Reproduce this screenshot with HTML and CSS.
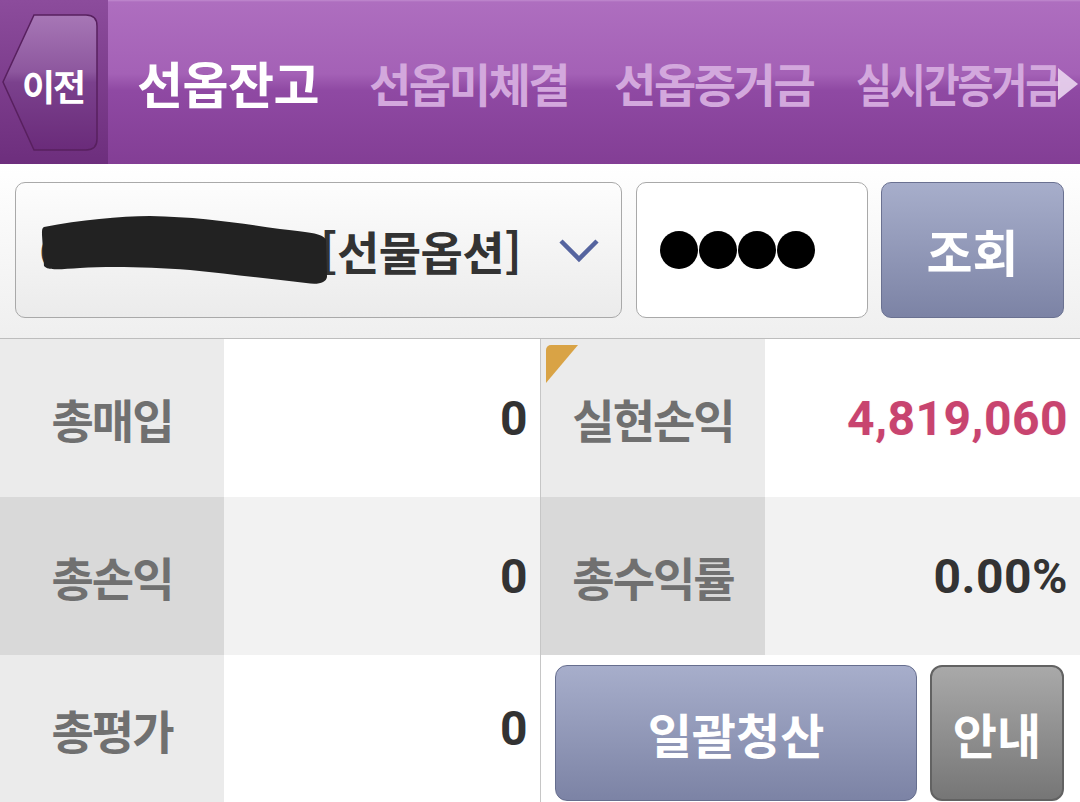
FILE: index.html
```html
<!DOCTYPE html>
<html lang="ko">
<head>
  <meta charset="UTF-8">
  <meta name="viewport" content="width=device-width, initial-scale=1.0">
  <title>선옵잔고</title>
  <link rel="stylesheet" href="styles.css">
</head>
<body>
  <header class="topbar">
    <div class="back-area">
      <div class="back-btn">
        <svg class="back-shape" viewBox="0 0 108 164" width="108" height="164">
          <defs>
            <linearGradient id="backFill" x1="0" y1="0" x2="0" y2="1">
              <stop offset="0" stop-color="#a777b6"/>
              <stop offset="0.42" stop-color="#8d579e"/>
              <stop offset="0.5" stop-color="#7b418d"/>
              <stop offset="1" stop-color="#6a2b7a"/>
            </linearGradient>
          </defs>
          <path d="M34 15 H86 Q97 15 97 26 V139 Q97 150 86 150 H34 L3 82 Z" fill="url(#backFill)" stroke="#58205f" stroke-width="1.5"/>
        </svg>
        <span class="back-label">이전</span>
      </div>
    </div>
    <nav class="tabs">
      <span class="tab active">선옵잔고</span>
      <span class="tab">선옵미체결</span>
      <span class="tab">선옵증거금</span>
      <span class="tab narrow">실시간증거금</span>
    </nav>
    <span class="tab-more"></span>
  </header>

  <section class="query">
    <div class="account-select">
      <span class="acct">
        <span class="acct-no">000-00-000000</span>
        <svg class="redact" viewBox="0 0 290 70" width="290" height="70" preserveAspectRatio="none">
          <path d="M4 12 C40 5 80 1 110 1 C160 2 200 8 240 14 C265 17 284 18 286 25 L287 62 C286 68 278 70 266 68 C230 64 190 59 150 55 C110 52 70 51 40 53 C22 54 8 56 4 51 L2 20 C2 15 2 13 4 12 Z" fill="#222"/>
        </svg>
      </span>
      <span class="acct-type">[선물옵션]</span>
      <svg class="chevron" viewBox="0 0 44 28" width="44" height="28">
        <path d="M4 5 L22 23 L40 5" fill="none" stroke="#55649f" stroke-width="4.5"/>
      </svg>
    </div>
    <div class="pw-field">
      <span class="dot"></span><span class="dot"></span><span class="dot"></span><span class="dot"></span>
    </div>
    <button class="btn-query">조회</button>
  </section>

  <section class="summary">
    <div class="cell label">총매입</div>
    <div class="cell value">0</div>
    <div class="cell label split marked">실현손익</div>
    <div class="cell value profit">4,819,060</div>

    <div class="cell label alt">총손익</div>
    <div class="cell value alt">0</div>
    <div class="cell label alt split">총수익률</div>
    <div class="cell value alt">0.00%</div>

    <div class="cell label">총평가</div>
    <div class="cell value">0</div>
    <div class="cell actions split">
      <button class="btn-clear">일괄청산</button>
      <button class="btn-info">안내</button>
    </div>
  </section>
</body>
</html>
```

FILE: styles.css
```css
/* General */
body {
  margin: 0;
  width: 1080px;
  height: 802px;
  overflow: hidden;
  font-family: "Noto Sans CJK KR", "Noto Sans", sans-serif;
  background: #fff;
  color: #333;
}

button {
  font-family: inherit;
  cursor: pointer;
}

/* Top bar */
.topbar {
  position: relative;
  display: flex;
  height: 164px;
  background: linear-gradient(#c08ace 0, #ae6ebf 2px, #a461b6 45%, #8f49a3 55%, #833e95 100%);
}

.back-area {
  position: relative;
  width: 108px;
  background: linear-gradient(#8c4c9c, #6d2e7d);
}

.back-shape {
  display: block;
}

.back-label {
  position: absolute;
  left: 22px;
  top: 59px;
  color: #fff;
  font-size: 36px;
  font-weight: 700;
  letter-spacing: -2px;
}

.tabs {
  display: flex;
  align-items: center;
  flex: 1;
  padding-left: 29px;
  overflow: hidden;
}

.tab {
  color: #d3a8dd;
  font-size: 46px;
  font-weight: 700;
  letter-spacing: -2.5px;
  margin-right: 46px;
  white-space: nowrap;
}

.tab.active {
  color: #fff;
  font-size: 50px;
  letter-spacing: -0.5px;
  margin-right: 50px;
}

.tab.narrow {
  display: inline-block;
  margin-left: -3px;
  margin-right: 0;
  transform: scaleX(0.85);
  transform-origin: left center;
}

.tab-more {
  position: absolute;
  right: 2px;
  top: 68px;
  width: 0;
  height: 0;
  border-top: 16px solid transparent;
  border-bottom: 16px solid transparent;
  border-left: 20px solid rgba(232, 210, 238, 0.92);
}

/* Query row */
.query {
  display: flex;
  gap: 14px;
  height: 156px;
  padding: 18px 16px 0 15px;
  background: linear-gradient(#fff, #efefef);
}

.account-select {
  display: flex;
  align-items: center;
  width: 608px;
  height: 136px;
  box-sizing: border-box;
  padding-left: 24px;
  border: 1px solid #a9a9a9;
  border-radius: 10px;
  background: linear-gradient(#fdfdfd, #ebebeb);
}

.acct {
  position: relative;
  width: 280px;
  font-size: 36px;
  font-weight: 700;
  color: #333;
  white-space: nowrap;
}

.redact {
  position: absolute;
  left: 0;
  top: -9px;
}

.acct-type {
  font-size: 46px;
  font-weight: 700;
  color: #333;
  letter-spacing: -0.5px;
}

.chevron {
  margin-left: 36px;
}

.pw-field {
  display: flex;
  align-items: center;
  width: 232px;
  height: 136px;
  box-sizing: border-box;
  padding-left: 23px;
  border: 1px solid #a9a9a9;
  border-radius: 10px;
  background: #fff;
}

.dot {
  width: 38px;
  height: 38px;
  margin-right: 1px;
  border-radius: 50%;
  background: #000;
}

.btn-query {
  width: 183px;
  height: 136px;
  margin-left: -1px;
  border: 1px solid #6a7191;
  border-radius: 10px;
  background: linear-gradient(#a7aecb, #7c83a5);
  color: #fff;
  font-size: 50px;
  font-weight: 700;
  letter-spacing: 0;
  padding: 0;
}

/* Summary grid */
.summary {
  display: grid;
  grid-template-columns: 224px 316px 225px 315px;
  grid-template-rows: 158px 158px 147px;
  border-top: 1px solid #bdbdbd;
}

.cell {
  display: flex;
  align-items: center;
  box-sizing: border-box;
}

.label {
  justify-content: center;
  background: #ebebeb;
  color: #707070;
  font-size: 46px;
  font-weight: 700;
  letter-spacing: -2px;
}

.value {
  justify-content: flex-end;
  padding-right: 12px;
  background: #fff;
  color: #333;
  font-family: Roboto, "Noto Sans", sans-serif;
  font-size: 48px;
  font-weight: 700;
  letter-spacing: 0.5px;
}

.label.alt {
  background: #d9d9d9;
}

.value.alt {
  background: #f2f2f2;
}

.split {
  border-left: 1px solid #c6c6c6;
}

.marked {
  position: relative;
}

.marked::before {
  content: "";
  position: absolute;
  left: 5px;
  top: 6px;
  width: 32px;
  height: 38px;
  border-top-left-radius: 5px;
  background: #d9a345;
  clip-path: polygon(0 0, 100% 0, 0 100%);
}

.profit {
  color: #c8446f;
  text-shadow: 0 0 2px #fde6ef;
}

.actions {
  grid-column: 3 / 5;
  align-items: flex-start;
  gap: 13px;
  padding: 10px 16px 0 14px;
  background: #fff;
}

.btn-clear {
  width: 362px;
  height: 136px;
  border: 1px solid #666e8e;
  border-radius: 12px;
  background: linear-gradient(#a7aecb, #7c83a5);
  color: #fff;
  font-size: 48px;
  font-weight: 700;
  letter-spacing: 0;
}

.btn-info {
  width: 134px;
  height: 136px;
  border: 2px solid #626262;
  border-radius: 12px;
  background: linear-gradient(#a9a9a9, #767676);
  color: #fff;
  font-size: 48px;
  font-weight: 700;
  letter-spacing: 0;
  padding: 0;
}
```
